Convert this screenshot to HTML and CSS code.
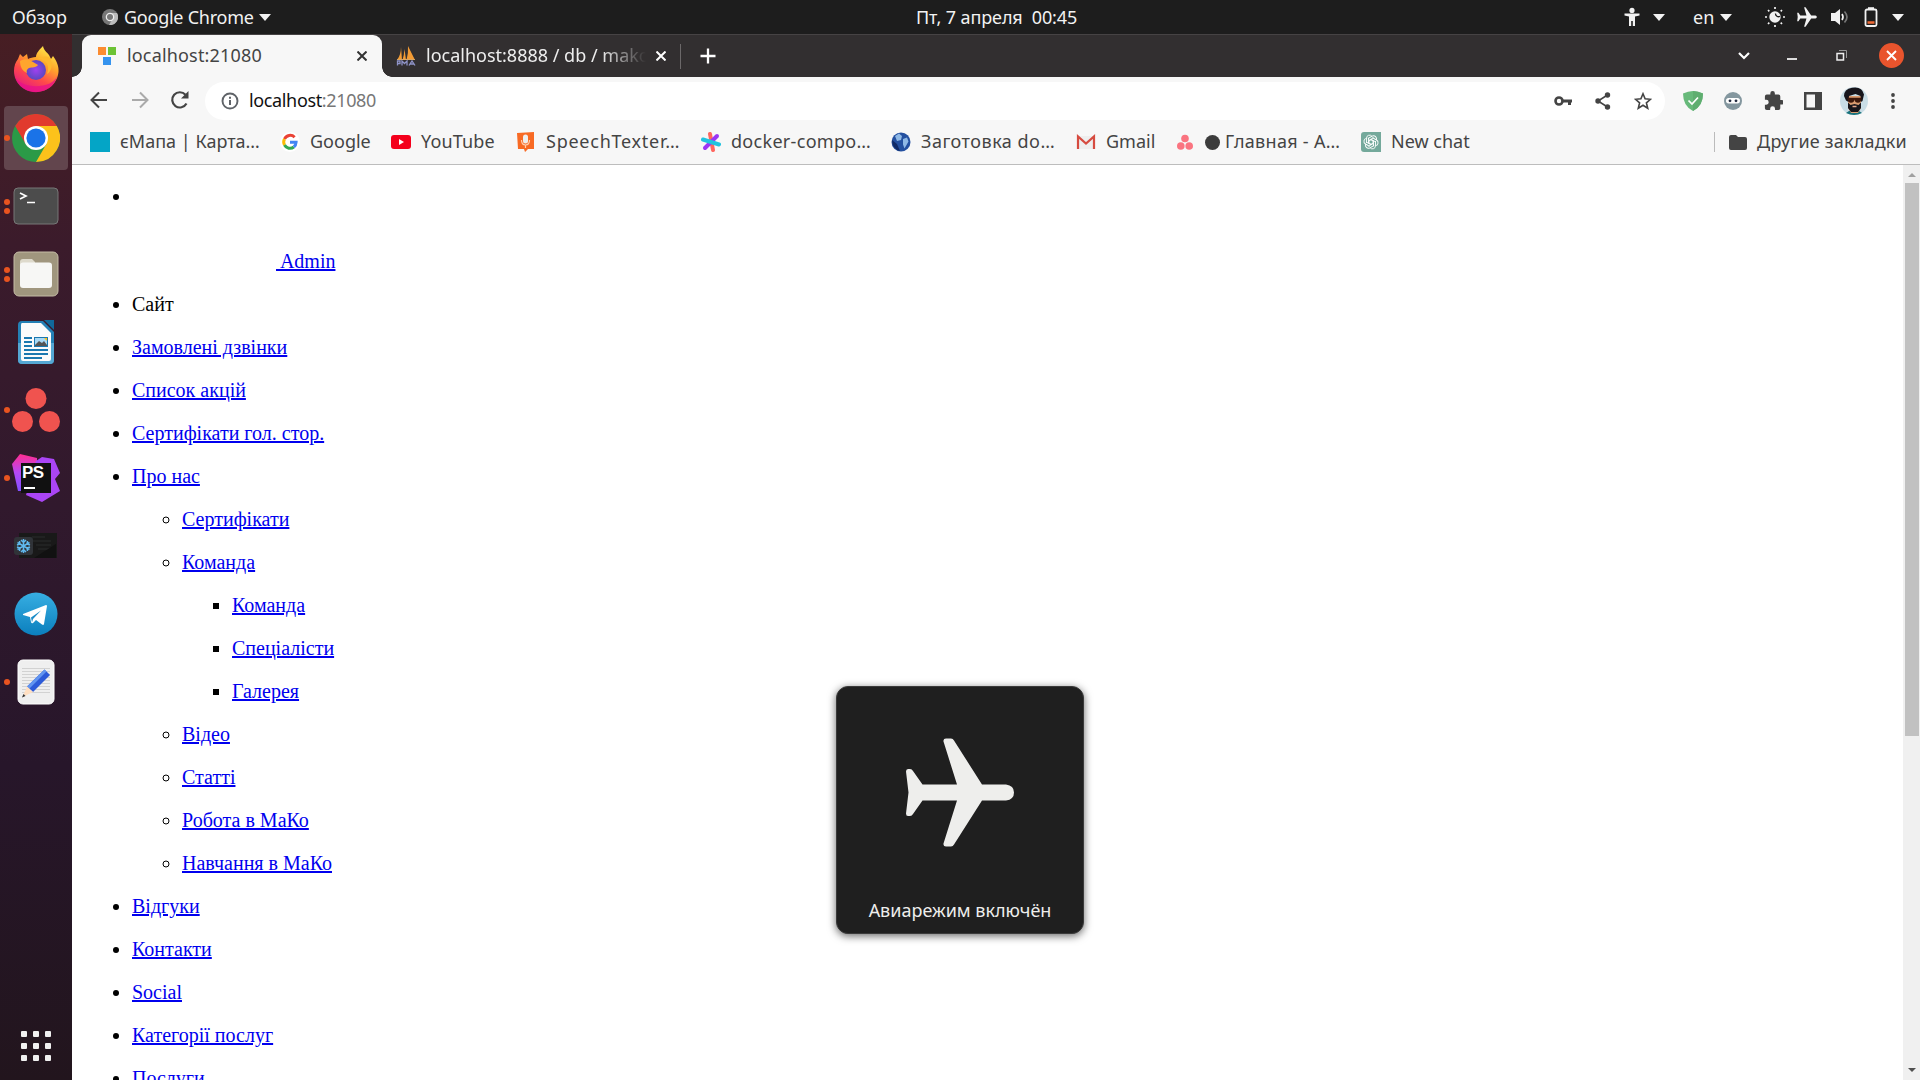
FILE: index.html
```html
<!DOCTYPE html>
<html lang="ru">
<head>
<meta charset="utf-8">
<title>localhost:21080</title>
<link rel="stylesheet" href="styles.css">
</head>
<body>
<header class="topbar">
  <span class="overview">Обзор</span>
  <div class="app-menu">
    <svg width="16" height="16" viewBox="0 0 16 16"><circle cx="8" cy="8" r="8" fill="#777"/><path d="M8 4h7a8 8 0 0 1-8 12l4-7z" fill="#bbb"/><circle cx="8" cy="8" r="4.3" fill="#eee"/><circle cx="8" cy="8" r="3" fill="#777"/></svg>
    <span class="app-name">Google Chrome</span>
    <i class="caret"></i>
  </div>
  <time class="clock">Пт, 7 апреля&nbsp; 00:45</time>
  <div class="status">
    <svg width="18" height="20" viewBox="0 0 18 20" fill="#f2f2f2"><circle cx="9" cy="3.4" r="2.6"/><path d="M1.5 6.5h15v2L12 9.5V19H9.8v-5H8.2v5H6V9.500L1.500 8.500z"/></svg>
    <i class="caret"></i>
    <span class="lang">en</span>
    <i class="caret"></i>
    <svg width="20" height="20" viewBox="0 0 20 20"><circle cx="10" cy="10" r="5.7" fill="#f2f2f2"/><path d="M10.500 6.500a3 3 0 0 0 4.500 2.800" stroke="#1d1d1d" stroke-width="1.300" fill="none"/><path d="M10 0v2M10 18v2M0 10h2M18 10h2M3 3l1.300 1.300M15.700 15.700L17 17M3 17l1.300-1.300M15.700 4.300L17 3" stroke="#f2f2f2" stroke-width="1.700"/></svg>
    <svg width="20" height="20" viewBox="-1 -1 110 110" fill="#f2f2f2"><path d="M40 0H46L77 46H100Q108 47 108 54T100 62H77L46 108H38L51 62H17L7 78H0L3 54L0 30H7L17 46H51L38 0z"/></svg>
    <svg width="19" height="18" viewBox="0 0 19 18"><path d="M1 5h4l5-4v16l-5-4H1z" fill="#f2f2f2"/><path d="M12 6q2 3 0 6" stroke="#f2f2f2" stroke-width="1.700" fill="none"/><path d="M14.500 3.500q5 5.500 0 11" stroke="#777" stroke-width="1.600" fill="none"/></svg>
    <svg width="14" height="20" viewBox="0 0 14 20"><rect x="1.500" y="2.500" width="11" height="16.500" rx="1.500" fill="none" stroke="#f2f2f2" stroke-width="1.800"/><path d="M4 1.200h6" stroke="#f2f2f2" stroke-width="2"/><path d="M3.500 15.500h7" stroke="#f06a35" stroke-width="2.500"/></svg>
    <i class="caret"></i>
  </div>
</header>

<div class="desktop">
<nav class="dock">
  <div class="app">
    <svg width="48" height="48" viewBox="0 0 48 48"><defs><linearGradient id="ff" x1=".8" y1="0" x2=".25" y2="1"><stop offset="0" stop-color="#fff44f"/><stop offset=".35" stop-color="#ffa62b"/><stop offset=".65" stop-color="#ff4a4a"/><stop offset="1" stop-color="#e31587"/></linearGradient><radialGradient id="fp"><stop offset="0" stop-color="#a040f0"/><stop offset="1" stop-color="#5b48c0"/></radialGradient></defs><path d="M31 1c1 5 4 6 6 9l2 4 2-3c4 5 6 11 5.500 16C45.500 38 36 47 24 47S2 38 2 26c0-5 1.500-9 4-12l2-5 3 3 4-3 1 5c2-1 5-2 8-2 0-4 4-8 7-11z" fill="url(#ff)"/><circle cx="24" cy="25" r="10" fill="url(#fp)"/><path d="M8 16c5-3 9-2 13 1l5 3c-2 3-6 2-9 3-2 1-3 3-2 5-5-2-7-7-7-12z" fill="#ffa52d"/><path d="M26 14c9 0 12 7 9 15 5-3 6-10 3-16-3-2-8-2-12 1z" fill="#ffb92e"/><path d="M3 31c4 13 37 14 42 0-4 21-37 22-42 0z" fill="#e8108a" opacity=".75"/></svg>
  </div>
  <div class="app active one">
    <svg width="48" height="48" viewBox="0 0 48 48"><circle cx="24" cy="24" r="24" fill="#2b9a47"/><path d="M3.200 12A24 24 0 0 1 44.800 12H24L13.600 30z" fill="#e13a2e"/><path d="M44.800 12A24 24 0 0 1 24 48L34.400 30 24 12z" fill="#fcc21b"/><circle cx="24" cy="24" r="12" fill="#fff"/><circle cx="24" cy="24" r="9.600" fill="#1a73e8"/></svg>
  </div>
  <div class="app two">
    <svg width="46" height="38" viewBox="0 0 46 38"><rect x="1" y="1" width="44" height="36" rx="4" fill="#4c4c4c" stroke="#777"/><path d="M7 6l6 3-6 3M14 15.500h8" stroke="#fff" stroke-width="1.700" fill="none"/></svg>
  </div>
  <div class="app two">
    <svg width="46" height="46" viewBox="0 0 46 46"><rect x="1" y="1" width="44" height="44" rx="5" fill="#a0967e" stroke="#c5bca6"/><path d="M7 14V11q0-3 3-3h9l3 3v5H7z" fill="#dedacc"/><rect x="7" y="11.500" width="32" height="25.500" rx="3" fill="#f7f7f5"/></svg>
  </div>
  <div class="app">
    <svg width="38" height="46" viewBox="0 0 38 46"><path d="M5 2h21l11 11v28q0 4-4 4H5q-4 0-4-4V6q0-4 4-4z" fill="#2480b5"/><path d="M1 24h36v17q0 4-4 4H5q-4 0-4-4z" fill="#55a7d3"/><path d="M5 4h19l10 10v26q0 2-2 2H6q-2 0-2-2V6q0-2 1-2z" fill="#fbfbfb"/><path d="M27 1h10v10z" fill="#11699a"/><path d="M7 19h8M7 23h8M7 27h8M7 31h24M7 35h24M7 39h18" stroke="#1b78b0" stroke-width="1.800"/><path d="M17 18h14v10H17z" fill="#1b78b0"/><path d="M18 19h12v8H18z" fill="#a8d9f5"/><path d="M18 26l4-4 3 2 2-2 3 4v1H18z" fill="#555"/><path d="M27 19h3v3z" fill="#ffc21a"/></svg>
  </div>
  <div class="app one">
    <svg width="48" height="44" viewBox="0 0 48 44" fill="#f0534f"><circle cx="24" cy="10.500" r="10.500"/><circle cx="10.500" cy="33.500" r="10.500"/><circle cx="37.500" cy="33.500" r="10.500"/></svg>
  </div>
  <div class="app one">
    <svg width="48" height="48" viewBox="0 0 48 48"><defs><linearGradient id="pa" x1="0" y1="0" x2="0" y2="1"><stop offset="0" stop-color="#ff2d90"/><stop offset=".5" stop-color="#b648f5"/><stop offset="1" stop-color="#8050ff"/></linearGradient></defs><path d="M8 0l17 4v33H6L0 10z" fill="url(#pa)"/><path d="M24 7l6-4 12 2 6 14-5 6 5 12-18 11-16-7z" fill="#aa45f5"/><path d="M9 9h30v30H9z" fill="#111"/><path d="M12 34h11" stroke="#fff" stroke-width="2"/></svg>
    <b class="ps">PS</b>
  </div>
  <div class="app">
    <svg class="flake" width="44" height="28" viewBox="0 0 44 28"><path d="M5 1h38v25H5z" fill="#191919"/><path d="M18 5h13M19 9h18M22 13h15M24 17h12" stroke="#2d3030" stroke-width=".8"/><path d="M20 26l22-14v14z" fill="#111"/><rect y="5" width="19" height="18" rx="3" fill="#303338"/><g stroke="#60b9ef" stroke-width="1.500" fill="none"><path d="M9.500 7v14M3.500 10.500l12 7M15.500 10.500l-12 7M7 8l2.500 2.500L12 8M7 20l2.500-2.500L12 20M3 13l3-1-.5-3M16 13l-3-1 .5-3M3 15l3 1-.5 3M16 15l-3 1 .5 3"/></g></svg>
  </div>
  <div class="app">
    <svg width="44" height="44" viewBox="0 0 44 44"><defs><linearGradient id="tg" x1="0" y1="0" x2="0" y2="1"><stop offset="0" stop-color="#37aee2"/><stop offset="1" stop-color="#0b7fbd"/></linearGradient></defs><circle cx="22" cy="22" r="21.500" fill="url(#tg)"/><path d="M9 22l23-9q1 0 1 1l-3 18q-.5 1.500-2 .5l-6-4.500-3 3q-1.500 1-2-1l-1-5-7-2z" fill="#fff"/><path d="M17 25.500l10-7-8 8.500-1 3.500" fill="#1b8cc8"/></svg>
  </div>
  <div class="app one">
    <svg width="38" height="46" viewBox="0 0 38 46"><rect x="1" y="1" width="36" height="44" rx="5" fill="#efefef" stroke="#fff"/><path d="M5 9.500h28M5 12.500h28M5 15.500h28M5 18.500h28M5 21.500h28M5 24.500h28M5 27.500h28M5 30.500h28M5 33.500h28" stroke="#d2d2d2"/><path d="M27.500 10.500l5.500 5.500-17 17-6-5.500z" fill="#2d5bd8"/><path d="M27.500 10.500l2 2L12 30l-2-2.500z" fill="#6295f0"/><path d="M10 27.500l6 5.500-10.500 5z" fill="#ffdfc2"/><path d="M6.500 35l2 2-3.500 1.500z" fill="#333"/></svg>
  </div>
  <div class="show-apps"><i></i><i></i><i></i><i></i><i></i><i></i><i></i><i></i><i></i></div>
</nav>

<main class="browser">
  <div class="tabstrip">
    <div class="tab current">
      <svg width="18" height="18" viewBox="0 0 18 18"><path d="M0 0h8v8H0z" fill="#fb8c31"/><path d="M10 0h8v8h-8z" fill="#6cc335"/><path d="M5 10h8v8H5z" fill="#3593ee"/></svg>
      <span class="tab-title">localhost:21080</span>
      <svg class="close" width="10" height="10" viewBox="0 0 10 10"><path d="M.5.5l9 9M9.500.5l-9 9" stroke="#333" stroke-width="2"/></svg>
    </div>
    <div class="tab other">
      <svg width="20" height="20" viewBox="0 0 20 20"><path d="M5 1Q5 9 1 14h5zM8.500 3Q8 10 6.500 14H10zM12 0l7 14h-8.500q2-7 1.500-14z" fill="#f39b34"/><path d="M1 13.500h18" stroke="#dba660"/><path d="M1.500 19.500V15H4v2.500H1.500M6 19.500V15l2.500 2.500L11 15v4.500M13 19.500L16 15l3 4.500M14 18h4" stroke="#8f93c8" stroke-width="1.300" fill="none"/></svg>
      <span class="tab-title">localhost:8888 / db / mako</span>
      <svg class="close" width="10" height="10" viewBox="0 0 10 10"><path d="M.5.5l9 9M9.500.5l-9 9" stroke="#fff" stroke-width="2"/></svg>
    </div>
    <i class="tab-sep"></i>
    <svg class="plus" width="16" height="16" viewBox="0 0 16 16"><path d="M8 .5v15M.5 8h15" stroke="#fff" stroke-width="2.300"/></svg>
    <div class="controls">
      <svg width="12" height="8" viewBox="0 0 12 8"><path d="M1 1l5 5 5-5" stroke="#fff" stroke-width="2.200" fill="none"/></svg>
      <svg class="min" width="10" height="2" viewBox="0 0 10 2"><path d="M0 1h10" stroke="#ddd" stroke-width="2"/></svg>
      <svg width="11" height="11" viewBox="0 0 11 11"><path d="M3 .5h7.500V8" stroke="#999" fill="none"/><path d="M1 3.500h6.500V10H1z" stroke="#eee" stroke-width="1.500" fill="none"/></svg>
      <svg width="25" height="25" viewBox="0 0 25 25"><circle cx="12.500" cy="12.500" r="12.500" fill="#e9542d"/><path d="M8 8l9 9M17 8l-9 9" stroke="#fff" stroke-width="1.900"/></svg>
    </div>
  </div>

  <div class="toolbar">
    <div class="nav">
      <svg width="20" height="18" viewBox="0 0 20 18"><path d="M18 9H3M10 1.500L2.500 9l7.500 7.500" stroke="#444" stroke-width="2" fill="none"/></svg>
      <svg width="20" height="18" viewBox="0 0 20 18"><path d="M2 9h15M10 1.500L17.500 9 10 16.500" stroke="#aaa" stroke-width="2" fill="none"/></svg>
      <svg width="20" height="20" viewBox="0 0 20 20"><path d="M16.500 13.500A7.600 7.600 0 1 1 15.500 4.800" stroke="#444" stroke-width="2.200" fill="none"/><path d="M18.500 1v7.500H11z" fill="#444"/></svg>
    </div>
    <div class="omnibox">
      <svg width="18" height="18" viewBox="0 0 18 18"><circle cx="9" cy="9" r="7.500" stroke="#5f6368" stroke-width="1.900" fill="none"/><path d="M9 8v5M9 4.800v2" stroke="#5f6368" stroke-width="2"/></svg>
      <span class="url">localhost<em>:21080</em></span>
      <div class="cells">
        <svg width="18" height="12" viewBox="0 0 18 12"><circle cx="5" cy="6" r="3.500" stroke="#444" stroke-width="2.600" fill="none"/><path d="M9 4.500h9v3h-1v2.500h-3V7.500H9z" fill="#444"/></svg>
        <svg width="16" height="18" viewBox="0 0 16 18" fill="#444"><circle cx="3" cy="9" r="2.700"/><circle cx="12.500" cy="3" r="2.700"/><circle cx="12.500" cy="15" r="2.700"/><path d="M12.500 3L3 9l9.500 6" stroke="#444" stroke-width="1.600" fill="none"/></svg>
        <svg width="18" height="18" viewBox="0 0 18 18"><path d="M9 1.800l2.100 5 5.400.5-4.100 3.500 1.300 5.400L9 13.300l-4.700 2.900 1.300-5.400L1.500 7.300l5.400-.5z" stroke="#444" stroke-width="1.600" fill="none"/></svg>
      </div>
    </div>
    <div class="cells ext">
      <svg width="20" height="20" viewBox="0 0 20 20"><path d="M10 0q5 0 10 2.500Q20 15 10 20 0 15 0 2.500 5 0 10 0z" fill="#67b97a"/><path d="M10 0q5 0 10 2.500Q20 15 10 20z" fill="#5fae70"/><path d="M5.500 9.500l3.500 3.500 6-6.500" stroke="#fff" stroke-width="1.700" fill="none"/></svg>
      <svg width="18" height="18" viewBox="0 0 18 18"><circle cx="9" cy="9" r="9" fill="#84979f"/><rect x="2" y="6" width="14" height="5.500" rx="2.700" fill="#fff"/><circle cx="6" cy="8.800" r="1.400" fill="#222b40"/><circle cx="12" cy="8.800" r="1.400" fill="#222b40"/></svg>
      <svg width="19" height="19" viewBox="1 1 21 21"><path d="M20.500 11H19V7a2 2 0 0 0-2-2h-4V3.500a2.500 2.500 0 0 0-5 0V5H4a2 2 0 0 0-2 2v3.800h1.500a2.700 2.700 0 0 1 0 5.400H2V20a2 2 0 0 0 2 2h3.800v-1.500a2.700 2.700 0 0 1 5.400 0V22H17a2 2 0 0 0 2-2v-4h1.500a2.500 2.500 0 0 0 0-5z" fill="#444"/></svg>
      <svg width="18" height="18" viewBox="0 0 18 18"><path d="M0 0h18v18H0z" fill="#444"/><path d="M2.500 2.500H11v13H2.500z" fill="#f7f7f7"/></svg>
      <svg class="avatar" width="28" height="28" viewBox="0 0 28 28"><circle cx="14" cy="14" r="14" fill="#c9dde6"/><path d="M6 26l3-2h10l3 2q-8 4-16 0z" fill="#17717b"/><path d="M8 9h13v12l-3 5h-7l-3-5z" fill="#d99b70"/><path d="M4 9Q4 2 12 .8 22-1 24 7.500L22.500 14l-1.300 1-.7-6-5-2-6.500 2-.5 6L6 13.500z" fill="#16151c"/><path d="M7.500 10.800h14q0 5-3.600 5-2.900 0-3.400-3.300-.5 3.300-3.400 3.300-3.600 0-3.600-5z" fill="#3c170b"/><path d="M8 15.500l2.500 2.500 4-1 4 1 2.500-2.500v5.500l-3 4h-7l-3-4z" fill="#17151b"/><path d="M12.500 19.500h4" stroke="#e4a68b" stroke-width="1.500"/></svg>
      <svg width="4" height="18" viewBox="0 0 4 18" fill="#444"><circle cx="2" cy="3" r="1.900"/><circle cx="2" cy="9" r="1.900"/><circle cx="2" cy="15" r="1.900"/></svg>
    </div>
  </div>

  <div class="bookmarks">
    <div class="bm"><svg width="20" height="20" viewBox="0 0 20 20"><path d="M0 0h20v20H0z" fill="#04a5c6"/></svg><span class="b1">єМапа | Карта…</span></div>
    <div class="bm"><svg width="20" height="20" viewBox="0 0 20 20"><circle cx="10" cy="10" r="10" fill="#fff"/><g fill="none" stroke-width="3"><path d="M14.600 5.200A6.200 6.200 0 0 0 4.500 7" stroke="#ea4335"/><path d="M4.500 7a6.200 6.200 0 0 0 0 6" stroke="#fbbc05"/><path d="M4.500 13a6.200 6.200 0 0 0 9.300 2" stroke="#34a853"/><path d="M13.800 15q2.200-1.800 2.300-4.800H10" stroke="#4285f4"/></g></svg><span class="b2">Google</span></div>
    <div class="bm"><svg width="20" height="20" viewBox="0 0 20 20"><rect y="3" width="20" height="14" rx="3" fill="#f4001c"/><path d="M8 7l5 3-5 3z" fill="#fff"/></svg><span class="b3">YouTube</span></div>
    <div class="bm"><svg width="20" height="20" viewBox="0 0 20 20"><path d="M2 1l17-1v17h-6l-3 3-1-3H3z" fill="#f86a24"/><rect x="8" y="2.500" width="5" height="9" rx="2.500" fill="#eee"/><path d="M6.500 8q0 5 4 5t4-5M10.500 13v3" stroke="#ffd0b0" stroke-width="1.200" fill="none"/></svg><span class="b4">SpeechTexter…</span></div>
    <div class="bm"><svg width="20" height="20" viewBox="0 0 20 20" stroke-width="4" stroke-linecap="round"><path d="M9 2l3 16" stroke="#ff655e"/><path d="M16 4L4 16" stroke="#9a35f5"/><path d="M2 7.500l16 5" stroke="#22c3df"/></svg><span class="b5">docker-compo…</span></div>
    <div class="bm"><svg width="20" height="20" viewBox="0 0 20 20"><circle cx="10" cy="10" r="9.500" fill="#2450a0"/><path d="M4 4l4-2.500 3 2.500-1 4-4 1zM12 7l4-1.500 1.500 4-4 7-1.500-4z" fill="#8fb9e6"/><path d="M1 8l5 4 3 7q-8-2-8-11z" fill="#102a66"/></svg><span class="b6">Заготовка do…</span></div>
    <div class="bm"><svg width="20" height="20" viewBox="0 0 20 20"><path d="M2 4h16v13H2z" fill="#eee"/><path d="M2 17V4.500l8 7 8-7V17" stroke="#d64b40" stroke-width="2.200" fill="none"/></svg><span class="b7">Gmail</span></div>
    <div class="bm"><svg width="20" height="20" viewBox="0 0 20 20" fill="#fa7480"><circle cx="10" cy="6.500" r="3.800"/><circle cx="5.800" cy="14" r="3.800"/><circle cx="14.200" cy="14" r="3.800"/></svg><i class="dot"></i><span class="b8">Главная - А…</span></div>
    <div class="bm"><svg width="20" height="20" viewBox="0 0 20 20"><path d="M3 0h17v20H3q-3 0-3-3V3q0-3 3-3z" fill="#74a99b"/><g fill="none" stroke="#fff" stroke-width=".9"><path id="petal" d="M5.500 11V6.200a3 3 0 0 1 5.500-1.700M8 11V8.300l4.500-2.600"/><use href="#petal" transform="rotate(60 10 10)"/><use href="#petal" transform="rotate(120 10 10)"/><use href="#petal" transform="rotate(180 10 10)"/><use href="#petal" transform="rotate(240 10 10)"/><use href="#petal" transform="rotate(300 10 10)"/></g></svg><span class="b9">New chat</span></div>
    <div class="bm others"><svg width="18" height="15" viewBox="0 0 18 15"><path d="M2 0h5l2 2h7q2 0 2 2v9q0 2-2 2H2q-2 0-2-2V2q0-2 2-2z" fill="#444"/></svg><span class="b10">Другие закладки</span></div>
  </div>

  <div class="viewport">
    <div class="page">
      <ul>
        <li>&nbsp;<div class="user"><a> Admin</a></div></li>
        <li>Сайт</li>
        <li><a>Замовлені дзвінки</a></li>
        <li><a>Список акцій</a></li>
        <li><a>Сертифікати гол. стор.</a></li>
        <li><a>Про нас</a>
          <ul>
            <li><a>Сертифікати</a></li>
            <li><a>Команда</a>
              <ul>
                <li><a>Команда</a></li>
                <li><a>Спеціалісти</a></li>
                <li><a>Галерея</a></li>
              </ul>
            </li>
            <li><a>Відео</a></li>
            <li><a>Статті</a></li>
            <li><a>Робота в МаКо</a></li>
            <li><a>Навчання в МаКо</a></li>
          </ul>
        </li>
        <li><a>Відгуки</a></li>
        <li><a>Контакти</a></li>
        <li><a>Social</a></li>
        <li><a>Категорії послуг</a></li>
        <li><a>Послуги</a></li>
      </ul>
    </div>
    <div class="scrollbar"><i class="up"></i><i class="thumb"></i><i class="down"></i></div>
  </div>
</main>
</div>

<div class="osd">
  <svg width="108" height="109" viewBox="0 0 108 109"><path d="M40 .5h5q2 0 3 2L76 46.500h24q8 1 8 8t-8 8H76L48 106.500q-1 2-3 2h-5q-3 0-2.500-3L51 62.500H16.500L7 76q-1 2-3 2H2q-2 0-2-2.500L2.500 54.500 0 33.500Q0 31 2 31h2q2 0 3 2l9.500 13.500H51L37.500 3.500Q37 .5 40 .5z" fill="#eeeeec"/></svg>
  <span>Авиарежим включён</span>
</div>
</body>
</html>
```
FILE: styles.css
```css
* { box-sizing: border-box; }
html, body { margin: 0; height: 100%; overflow: hidden; }
body {
  display: flex;
  flex-direction: column;
  font-family: "Noto Sans", "Open Sans", sans-serif;
  font-size: 18px;
  line-height: 24px;
  background: #fff;
  white-space: nowrap;
}
svg { display: block; flex: none; }

/* System panel */
.topbar {
  height: 34px;
  flex: none;
  display: grid;
  grid-template-columns: 102px 814px 1fr auto;
  align-items: center;
  background: #1d1d1d;
  color: #f2f2f2;
}
.overview { padding-left: 12px; }
.app-menu { display: flex; align-items: center; }
.app-name { margin-left: 6px; width: 129px; letter-spacing: -.25px; }
.clock { letter-spacing: -.12px; padding-bottom: 1px; }
.caret {
  margin-left: 6px;
  border: 6px solid transparent;
  border-top: 7px solid #f2f2f2;
  border-bottom: 0;
}
.status {
  display: grid;
  grid-template-columns: 30px 40px 27px 45px 32px 33px 34px 28px 28px;
  align-items: center;
}
.status .caret { margin: 0; justify-self: start; }

.desktop { flex: 1; min-height: 0; display: flex; }

/* Launcher */
.dock {
  width: 72px;
  flex: none;
  display: flex;
  flex-direction: column;
  padding-top: 2px;
  background: linear-gradient(#471e23 0, #3b1b2b 20%, #31192d 45%, #27162a 70%, #22151d 100%);
}
.app {
  position: relative;
  width: 64px;
  height: 64px;
  margin: 2px 4px;
  display: flex;
  align-items: center;
  justify-content: center;
  border-radius: 4px;
}
.app:first-child { padding-bottom: 2px; }
.app.active { background: #62454d; }
.app.one::before, .app.two::before, .app.two::after {
  content: "";
  position: absolute;
  left: 0;
  top: 29px;
  width: 6px;
  height: 6px;
  border-radius: 50%;
  background: #e95420;
}
.app.two::before { top: 25px; }
.app.two::after { top: 34px; }
.ps {
  position: absolute;
  left: 18px;
  top: 17px;
  font: bold 17px/20px "Liberation Sans", sans-serif;
  letter-spacing: -.5px;
  color: #fff;
}
.show-apps {
  margin: auto 0 19px 21px;
  display: grid;
  grid-template-columns: repeat(3, 6px);
  gap: 6px;
}
.show-apps i { height: 6px; border-radius: 1px; background: #f0f0f0; }

/* Browser window */
.browser { flex: 1; min-width: 0; display: flex; flex-direction: column; background: #f7f7f7; }
.tabstrip {
  height: 43px;
  flex: none;
  display: flex;
  align-items: center;
  padding-left: 10px;
  background: #322f30;
  border-top: 1px solid #464344;
}
.tab { height: 42px; display: flex; align-items: center; padding-bottom: 1px; }
.tab-title { padding-bottom: 1px; }
.tab.current {
  position: relative;
  width: 300px;
  padding: 0 15px 1px 16px;
  border-radius: 9px 9px 0 0;
  background: #f7f7f7;
  color: #444;
}
.tab.current::before, .tab.current::after {
  content: "";
  position: absolute;
  bottom: 0;
  left: -10px;
  width: 10px;
  height: 10px;
  background: radial-gradient(circle at 0 0, #322f30 9.500px, #f7f7f7 10px);
}
.tab.current::after {
  left: 100%;
  background: radial-gradient(circle at 100% 0, #322f30 9.500px, #f7f7f7 10px);
}
.tab.current .tab-title { margin-left: 11px; letter-spacing: .17px; }
.tab .close { margin-left: auto; }
.tab.other { width: 298px; padding: 0 14px 1px; color: #eee; }
.tab.other .tab-title {
  margin-left: 10px;
  width: 220px;
  overflow: hidden;
  -webkit-mask-image: linear-gradient(90deg, #000 175px, transparent 220px);
  mask-image: linear-gradient(90deg, #000 175px, transparent 220px);
}
.tab-sep { width: 1px; height: 25px; background: #6b6869; }
.plus { margin-left: 19px; }
.controls {
  margin-left: auto;
  padding: 0 4px 1px 0;
  display: grid;
  grid-template-columns: 48px 48px 51px 49px;
  justify-items: center;
  align-items: center;
}
.controls .min { margin-top: 6px; }

.toolbar { height: 48px; flex: none; display: flex; align-items: center; padding: 0 7px 5px 7px; }
.nav { width: 126px; display: grid; grid-template-columns: 40px 41px 40px; justify-items: center; align-items: center; height: 38px; margin-top: 3px; }
.toolbar .omnibox {
  flex: 1;
  height: 38px;
  margin-top: 5px;
  display: flex;
  align-items: center;
  padding: 0 2px 0 16px;
  border-radius: 19px;
  background: #fff;
}
.omnibox > svg, .omnibox > .cells { margin-top: -1px; }
.url { margin-left: 10px; padding-bottom: 2px; letter-spacing: -.36px; color: #111; }
.url em { font-style: normal; color: #777; }
.cells { display: grid; grid-auto-flow: column; grid-auto-columns: 40px; justify-items: center; align-items: center; }
.omnibox .cells { margin-left: auto; }
.ext { margin-left: 8px; margin-top: 4px; }
.ext .avatar { margin-left: 2px; }

.bookmarks {
  height: 40px;
  flex: none;
  display: grid;
  grid-template-columns: 190px 111px 124px 186px 190px 185px 99px 186px 1fr auto;
  align-items: center;
  padding: 0 13px 5px 18px;
  border-bottom: 1px solid #bdbdbd;
  color: #444;
}
.bm { display: flex; align-items: center; }
.bm span { margin-left: 10px; padding-bottom: 2px; }
.dot { width: 15px; height: 15px; margin-left: 10px; border-radius: 50%; background: #3c3c3c; }
.bm .b3 { letter-spacing: .15px; }
.bm .b4 { margin-left: 11px; letter-spacing: .75px; }
.bm .b5 { letter-spacing: .3px; }
.bm .b6 { letter-spacing: .5px; }
.bm .b8 { margin-left: 5px; letter-spacing: .3px; }
.bm .b10 { margin-left: 10px; letter-spacing: .2px; }
.others { border-left: 1px solid #bbb; padding-left: 14px; height: 20px; }

/* Page */
.viewport { flex: 1; min-height: 0; display: flex; background: #fff; }
.page {
  flex: 1;
  overflow: hidden;
  font: 20px/23px "Liberation Serif", serif;
  color: #000;
}
.page ul { margin: 0; padding-left: 50px; }
.page > ul { padding: 20px 0 0 60px; }
.page li + li, .page ul ul { margin-top: 20px; }
.page a { color: #0000ee; text-decoration: underline 2px; }
.user { margin-top: 42px; padding-left: 144px; white-space: pre; }
.scrollbar { width: 17px; flex: none; background: #f0f0f0; display: flex; flex-direction: column; align-items: center; }
.up { border: 4px solid transparent; border-bottom-color: #a0a0a0; border-top: 0; margin: 8px 0 6px; }
.thumb { width: 14px; height: 553px; background: #c1c1c1; }
.down { border: 4px solid transparent; border-top-color: #505050; border-bottom: 0; margin: auto 0 8px; }

/* On-screen notice */
.osd {
  position: absolute;
  left: 836px;
  top: 686px;
  width: 248px;
  height: 248px;
  display: flex;
  flex-direction: column;
  align-items: center;
  justify-content: space-between;
  padding: 51px 0 11px;
  border: 1px solid #3a3a3a;
  border-radius: 12px;
  background: #1f1f1f;
  color: #eeeeec;
  box-shadow: 0 2px 8px rgba(0, 0, 0, .6);
}
.osd svg { margin-right: 1px; }
```
